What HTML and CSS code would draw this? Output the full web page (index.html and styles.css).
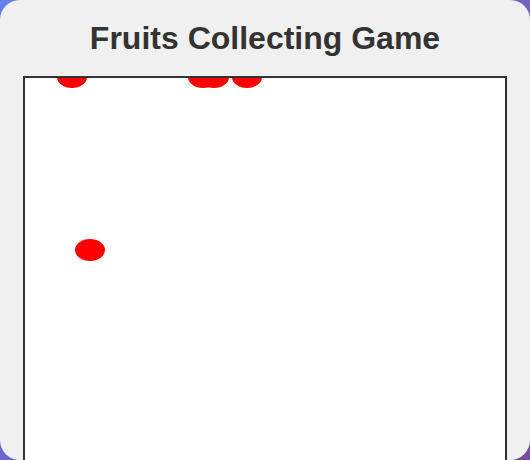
FILE: index.html
```html
<!DOCTYPE html>
<html>
<head>
<meta charset="utf-8">
<title>Fruits Collecting Game</title>
<link rel="stylesheet" href="styles.css">
</head>
<body>
<div class="card">
  <h1 class="title">Fruits Collecting Game</h1>
  <div class="board">
    <svg class="layer" width="480" height="400" viewBox="0 0 480 400">
      <g fill="#ff0000">
        <ellipse cx="47" cy="-1" rx="15" ry="11"/>
        <ellipse cx="178" cy="-1" rx="15" ry="11"/>
        <ellipse cx="189" cy="-1" rx="15" ry="11"/>
        <ellipse cx="222" cy="-1" rx="15" ry="11"/>
        <ellipse cx="65" cy="172" rx="15" ry="11"/>
      </g>
    </svg>
  </div>
</div>
</body>
</html>
```
FILE: styles.css
```css
html, body {
  margin: 0;
  padding: 0;
}
body {
  width: 530px;
  height: 460px;
  overflow: hidden;
  background: linear-gradient(135deg, #667eea, #764ba2);
  font-family: "Liberation Sans", Arial, sans-serif;
}
.card {
  box-sizing: border-box;
  width: 530px;
  height: 460px;
  background: #f0f0f0;
  border-radius: 20px;
  padding: 20px 23px 0;
}
.title {
  margin: 0 0 19px;
  font-size: 32px;
  font-weight: bold;
  color: #333333;
  text-align: center;
  line-height: 37px;
}
.board {
  width: 480px;
  height: 400px;
  border: 2px solid #333333;
  background: #ffffff;
  overflow: hidden;
}
.layer {
  display: block;
  overflow: hidden;
}
```
